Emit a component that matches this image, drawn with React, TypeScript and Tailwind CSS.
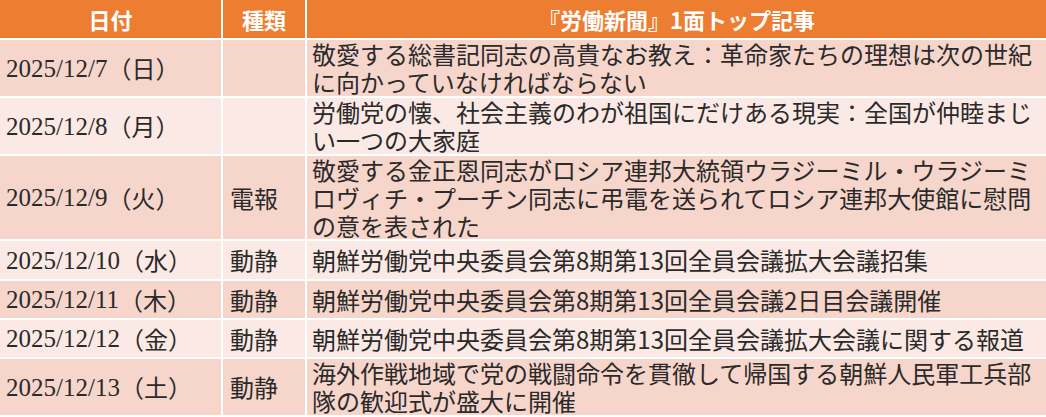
const rows = [
  { date: '2025/12/7', day: '日', kind: '', lines: ['敬愛する総書記同志の高貴なお教え：革命家たちの理想は次の世紀', 'に向かっていなければならない'], h: 'h-[56px]' },
  { date: '2025/12/8', day: '月', kind: '', lines: ['労働党の懐、社会主義のわが祖国にだけある現実：全国が仲睦まじ', 'い一つの大家庭'], h: 'h-[56px]' },
  { date: '2025/12/9', day: '火', kind: '電報', lines: ['敬愛する金正恩同志がロシア連邦大統領ウラジーミル・ウラジーミ', 'ロヴィチ・プーチン同志に弔電を送られてロシア連邦大使館に慰問', 'の意を表された'], h: 'h-[83px]' },
  { date: '2025/12/10', day: '水', kind: '動静', lines: ['朝鮮労働党中央委員会第8期第13回全員会議拡大会議招集'], h: 'h-[38px]' },
  { date: '2025/12/11', day: '木', kind: '動静', lines: ['朝鮮労働党中央委員会第8期第13回全員会議2日目会議開催'], h: 'h-[37px]' },
  { date: '2025/12/12', day: '金', kind: '動静', lines: ['朝鮮労働党中央委員会第8期第13回全員会議拡大会議に関する報道'], h: 'h-[37px]' },
  { date: '2025/12/13', day: '土', kind: '動静', lines: ['海外作戦地域で党の戦闘命令を貫徹して帰国する朝鮮人民軍工兵部', '隊の歓迎式が盛大に開催'], h: 'h-[56px]' },
];

const jp = "font-[family-name:'Noto_Sans_CJK_JP',sans-serif]";
const serif = "font-[family-name:'Liberation_Serif','Noto_Sans_CJK_JP',serif]";

export default function App() {
  return (
    <div className="w-[1046px] h-[417px] bg-white overflow-hidden">
      <div className="flex flex-col gap-[2px] text-[#2a2a2a]">
        {/* Header */}
        <div className="flex h-[38px] gap-[2px] bg-white">
          <div className={`${jp} w-[221px] flex items-center justify-center bg-[#ED7D31] text-white text-[22px] font-bold`}>日付</div>
          <div className={`${jp} w-[82px] flex items-center justify-center bg-[#ED7D31] text-white text-[22px] font-bold`}>種類</div>
          <div className={`${jp} flex-1 flex items-center justify-center bg-[#ED7D31] text-white text-[22px] font-bold`}>『労働新聞』1面トップ記事</div>
        </div>

        {rows.map((r, i) => {
          const bg = i % 2 === 0 ? 'bg-[#F6D5CB]' : 'bg-[#FAE9E4]';
          return (
            <div key={r.date} className={`flex gap-[2px] ${r.h}`}>
              <div className={`w-[221px] flex items-center pl-[6px] ${bg} whitespace-nowrap`}>
                <span className={`${serif} text-[25px] leading-none`}>{r.date}</span>
                <span className={`${jp} text-[24px] leading-none`}>（{r.day}）</span>
              </div>
              <div className={`${jp} w-[82px] flex items-center pl-[7px] ${bg} text-[24px] leading-none whitespace-nowrap`}>
                {r.kind}
              </div>
              <div className={`${jp} flex-1 flex flex-col justify-center pl-[5px] ${bg} text-[24px] leading-[28px]`}>
                {r.lines.map((l) => (
                  <div key={l} className="whitespace-nowrap">{l}</div>
                ))}
              </div>
            </div>
          );
        })}
      </div>
    </div>
  );
}
